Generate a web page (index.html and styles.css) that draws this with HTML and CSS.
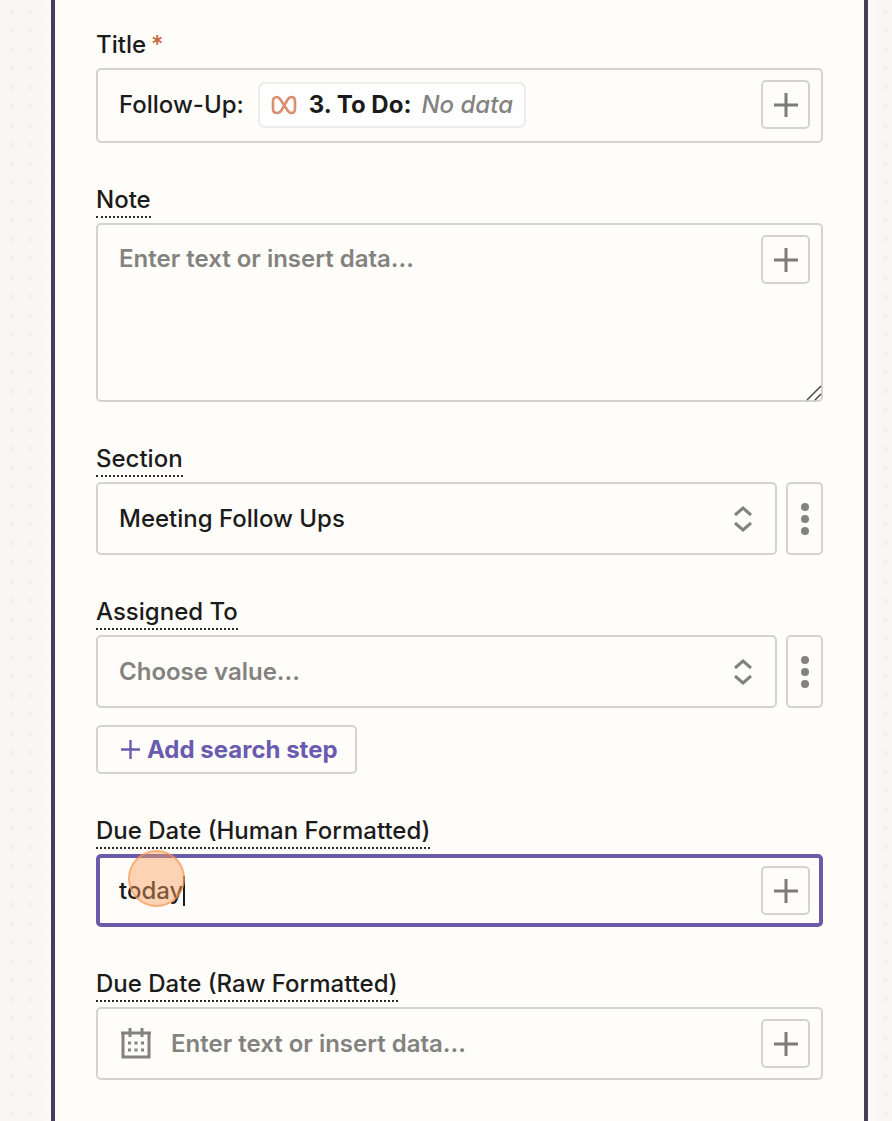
FILE: index.html
```
<!DOCTYPE html>
<html lang="en">
<head>
  <meta charset="UTF-8" />
  <meta name="viewport" content="width=device-width, initial-scale=1.0" />
  <title>Create Task</title>
  <link rel="stylesheet" href="styles.css">
</head>
<body>

  <!-- shared icons -->
  <svg class="sprite" aria-hidden="true">
    <symbol id="plus" viewBox="0 0 24 24">
      <path d="M12 0v24M0 12h24" fill="none" stroke="currentColor" stroke-width="3" />
    </symbol>
    <symbol id="updown" viewBox="0 0 18 26">
      <path d="M1 9l8-7 8 7M1 17l8 7 8-7" fill="none" stroke="currentColor" stroke-width="3" />
    </symbol>
    <symbol id="dots" viewBox="0 0 8 32">
      <circle cx="4" cy="4" r="4" fill="currentColor" />
      <circle cx="4" cy="16" r="4" fill="currentColor" />
      <circle cx="4" cy="28" r="4" fill="currentColor" />
    </symbol>
  </svg>

  <form class="panel">

    <!-- Title -->
    <div class="field">
      <span class="label" id="titleLabel">Title<span class="required">*</span></span>
      <div class="box box-title">
        <div class="rich" role="textbox" contenteditable="true" aria-labelledby="titleLabel" spellcheck="false">
          <span>Follow-Up:</span>
          <span class="pill" contenteditable="false">
            <svg class="pill-icon" viewBox="0 0 26 20" aria-hidden="true">
              <path d="M13 10L9 4C8 3 7 2 6 2 3 2 2 4 2 6v8c0 2 1 4 4 4 2 0 3-1 4-2l7-12c1-1 2-2 3-2 3 0 4 2 4 4v8c0 2-1 4-4 4-1 0-2-1-3-2z" fill="none" stroke="currentColor" stroke-width="2.6" stroke-linejoin="round" />
            </svg>
            <strong>3. To Do:</strong>
            <em>No data</em>
          </span>
        </div>
        <button type="button" class="insert" aria-label="Insert data"><svg><use href="#plus" /></svg></button>
      </div>
    </div>

    <!-- Note -->
    <div class="field">
      <label class="label hint" for="note">Note</label>
      <div class="box box-note">
        <textarea id="note" placeholder="Enter text or insert data..."></textarea>
        <button type="button" class="insert" aria-label="Insert data"><svg><use href="#plus" /></svg></button>
        <svg class="grip" viewBox="0 0 16 16" aria-hidden="true">
          <path d="M1 15L15 1M9 15l6-6" fill="none" stroke="currentColor" stroke-width="1.5" />
        </svg>
      </div>
    </div>

    <!-- Section -->
    <div class="field">
      <label class="label hint" for="section">Section</label>
      <div class="row">
        <div class="select">
          <select id="section">
            <option>Meeting Follow Ups</option>
          </select>
          <svg aria-hidden="true"><use href="#updown" /></svg>
        </div>
        <button type="button" class="more" aria-label="More options"><svg><use href="#dots" /></svg></button>
      </div>
    </div>

    <!-- Assigned To -->
    <div class="field">
      <label class="label hint" for="assigned">Assigned To</label>
      <div class="row">
        <div class="select">
          <select id="assigned" class="empty">
            <option>Choose value...</option>
          </select>
          <svg aria-hidden="true"><use href="#updown" /></svg>
        </div>
        <button type="button" class="more" aria-label="More options"><svg><use href="#dots" /></svg></button>
      </div>
      <button type="button" class="add-step"><svg><use href="#plus" /></svg>Add search step</button>
    </div>

    <!-- Due Date (Human Formatted) -->
    <div class="field">
      <label class="label hint" for="dueHuman">Due Date (Human Formatted)</label>
      <div class="box active">
        <div class="typing">
          <input type="text" id="dueHuman" class="fit" value="today" spellcheck="false" />
          <span class="caret"></span>
          <span class="click-mark"></span>
        </div>
        <button type="button" class="insert" aria-label="Insert data"><svg><use href="#plus" /></svg></button>
      </div>
    </div>

    <!-- Due Date (Raw Formatted) -->
    <div class="field">
      <label class="label hint" for="dueRaw">Due Date (Raw Formatted)</label>
      <div class="box">
        <svg class="calendar" viewBox="0 0 30 32" aria-hidden="true">
          <path d="M2 5h26v24H2zM0 5h30M9 0v9M21 0v9" fill="none" stroke="currentColor" stroke-width="3" />
          <path d="M7 15h16M7 22h16" fill="none" stroke="currentColor" stroke-width="3" stroke-dasharray="3 3.5" />
        </svg>
        <input type="text" id="dueRaw" placeholder="Enter text or insert data..." />
        <button type="button" class="insert" aria-label="Insert data"><svg><use href="#plus" /></svg></button>
      </div>
    </div>

  </form>

</body>
</html>
```
FILE: styles.css
```
* {
  box-sizing: border-box;
}
body {
  margin: 0;
  padding: 0 24px 0 51px;
  min-height: 100vh;
  display: flex;
  font-family: Inter, sans-serif;
  font-size: 24px;
  font-weight: 500;
  line-height: 28px;
  color: #1c1b1b;
  background-color: #f8f7f4;
  background-image: radial-gradient(circle, #f2f1ee 2px, transparent 3px);
  background-size: 19px 19px;
  background-position: 2px 2px;
}
input, textarea, select, button {
  font: inherit;
  color: inherit;
  background: none;
  border: none;
  outline: none;
  margin: 0;
  padding: 0;
}
.sprite {
  display: none;
}
.panel {
  flex: 1;
  min-width: 0;
  padding: 31px 41px 30px;
  border: solid #463f5c;
  border-width: 0 4px;
  background-color: #fffdf9;
  box-shadow: 0 0 10px 6px #fbfafa;
}
.field {
  display: flex;
  flex-direction: column;
  align-items: flex-start;
  margin-bottom: 43px;
}
.label {
  padding-bottom: 4px;
  margin-bottom: 5px;
}
.hint {
  padding-bottom: 2px;
  border-bottom: 2px dotted #2b2a2a;
}
.required {
  margin-left: 5px;
  color: #c9653b;
}

/* boxes */
.box {
  width: 100%;
  min-height: 73px;
  display: flex;
  align-items: center;
  gap: 12px;
  padding: 10px 11px 10px 21px;
  border: 2px solid #d4d3d0;
  border-radius: 5px;
  position: relative;
}
.box-title {
  min-height: 75px;
  padding-bottom: 12px;
}
.box-note {
  min-height: 179px;
  align-items: flex-start;
}
.box.active {
  border: 4px solid #6a5ba8;
  padding: 8px 9px 8px 19px;
}
.box input, .box textarea {
  flex: 1;
  min-width: 0;
}
.box textarea {
  height: 140px;
  padding-top: 10px;
  resize: none;
}
::placeholder {
  color: #84827f;
  font-weight: 600;
  opacity: 1;
}
.grip {
  position: absolute;
  right: -1px;
  bottom: -1px;
  width: 16px;
  height: 16px;
  color: #4a4948;
}

/* title text with a mapped value */
.rich {
  flex: 1;
  display: flex;
  align-items: center;
  gap: 14px;
  outline: none;
}
.pill {
  display: flex;
  align-items: center;
  height: 46px;
  padding: 0 11px;
  border: 2px solid #ececec;
  border-radius: 7px;
  background-color: #fffefe;
}
.pill-icon {
  width: 26px;
  height: 20px;
  margin-right: 12px;
  color: #d98e70;
}
.pill strong {
  font-weight: 700;
  margin-right: 10px;
}
.pill em {
  color: #84827f;
}

/* buttons */
.insert {
  flex: none;
  width: 49px;
  height: 49px;
  display: grid;
  place-items: center;
  border: 2px solid #d4d3d0;
  border-radius: 5px;
  color: #7d7b79;
  cursor: pointer;
}
.insert svg {
  width: 24px;
  height: 24px;
}
.add-step {
  display: flex;
  align-items: center;
  gap: 7px;
  height: 49px;
  margin-top: 17px;
  padding: 0 17px 0 23px;
  border: 2px solid #d4d3d0;
  border-radius: 5px;
  font-weight: 700;
  color: #6a5bb0;
  cursor: pointer;
}
.add-step svg {
  width: 19px;
  height: 19px;
}

/* selects */
.row {
  width: 100%;
  display: flex;
  gap: 9px;
}
.select {
  flex: 1;
  display: grid;
  align-items: center;
}
.select > * {
  grid-area: 1 / 1;
}
.select select {
  appearance: none;
  height: 73px;
  padding: 0 60px 0 21px;
  border: 2px solid #d4d3d0;
  border-radius: 5px;
}
.select .empty {
  color: #84827f;
  font-weight: 600;
}
.select svg {
  justify-self: end;
  width: 18px;
  height: 26px;
  margin-right: 25px;
  color: #84827f;
  pointer-events: none;
}
.more {
  width: 37px;
  display: grid;
  place-items: center;
  border: 2px solid #d4d3d0;
  border-radius: 5px;
  color: #84827f;
  cursor: pointer;
}
.more svg {
  width: 8px;
  height: 32px;
}

/* text being typed */
.typing {
  flex: 1;
  display: flex;
  align-items: center;
  position: relative;
}
.typing .fit {
  flex: none;
  field-sizing: content;
}
.caret {
  width: 2px;
  height: 30px;
  background-color: #1c1b1b;
}
.click-mark {
  position: absolute;
  left: 9px;
  top: -26px;
  width: 57px;
  height: 57px;
  border: 2px solid rgba(245, 150, 80, 0.6);
  border-radius: 50%;
  background-color: rgba(248, 160, 95, 0.45);
  pointer-events: none;
}

.calendar {
  flex: none;
  width: 30px;
  height: 32px;
  margin: 0 8px 0 2px;
  color: #84827f;
}
```
